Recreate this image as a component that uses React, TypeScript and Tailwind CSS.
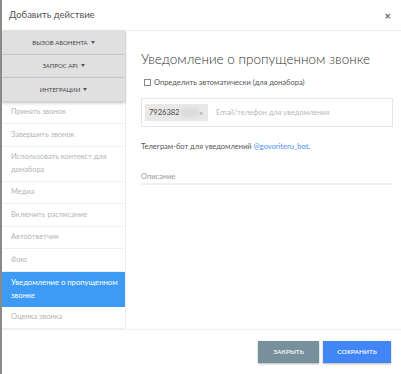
import React from "react";

const items: { label: string; active?: boolean }[] = [
  { label: "Принять звонок" },
  { label: "Завершить звонок" },
  { label: "Использовать контекст для донабора" },
  { label: "Медиа" },
  { label: "Включить расписание" },
  { label: "Автоответчик" },
  { label: "Факс" },
  { label: "Уведомление о пропущенном звонке", active: true },
  { label: "Оценка звонка" },
];

const groups = ["Вызов абонента", "Запрос API", "Интеграции"];

function Caret() {
  return <span className="ml-[3px] inline-block border-x-[2.5px] border-t-[3px] border-x-transparent border-t-[#555] align-middle" />;
}

export default function App() {
  return (
    <div
      className="flex h-[374px] w-[401px] flex-col overflow-hidden border-l-2 border-[#8a8a8a] bg-white"
      style={{ fontFamily: 'Lato, "Open Sans", sans-serif' }}
    >
      {/* Header */}
      <div className="flex h-[31px] shrink-0 items-center justify-between border-b border-[#eeeeee] pl-[7px] pr-[10px]">
        <span className="text-[9.5px] text-[#555]">Добавить действие</span>
        <span className="text-[11px] font-bold leading-none text-[#666]">×</span>
      </div>

      {/* Body */}
      <div className="flex h-[298px] shrink-0">
        <div className="flex w-[124px] shrink-0 flex-col border-r border-[#eeeeee]">
          {groups.map((g) => (
            <div
              key={g}
              className="flex h-[23.5px] shrink-0 items-center justify-center border-b border-[#cfcfcf] bg-[#e0e0e0] text-[6px] uppercase text-[#444] shadow-[0_1px_3px_rgba(0,0,0,0.25)]"
            >
              {g}
              <Caret />
            </div>
          ))}
          {items.map((it) => (
            <div
              key={it.label}
              className={
                it.active
                  ? "shrink-0 border-b border-[#3d9bf6] bg-[#3d9bf6] py-[4.5px] pl-[9px] pr-[2px] text-[7.7px] leading-[12.5px] text-white"
                  : "shrink-0 border-b border-[#f0f0f0] py-[4.5px] pl-[9px] pr-[4px] text-[7.5px] leading-[12.5px] text-[#b4b4b4]"
              }
            >
              {it.label}
            </div>
          ))}
        </div>

        <div className="flex-1 pl-[15px] pr-[8px] pt-[18px]">
          <h2 className="text-[13.5px] font-light leading-[20px] text-[#333]">Уведомление о пропущенном звонке</h2>
          <label className="mt-[8px] flex items-center gap-[3px] text-[7.5px] text-[#555]">
            <span className="ml-[3px] inline-block h-[7px] w-[7px] border border-[#888] bg-white" />
            Определить автоматически (для донабора)
          </label>
          <div className="mt-[10px] flex h-[29px] items-center gap-[8px] border border-[#e6e6e6] px-[3px]">
            <div className="flex h-[17px] w-[63px] items-center bg-[#e8e8e8] pl-[4px] pr-[5px] text-[7.5px] text-[#444]">
              <span>7926382</span>
              <span className="ml-[1px] h-[9px] w-[22px] rounded-sm bg-[#dcdcdc] blur-[1.5px]" />
              <span className="ml-auto text-[7px] text-[#999]">×</span>
            </div>
            <span className="text-[7.5px] text-[#b8b8b8]">Email/телефон для уведомления</span>
          </div>
          <p className="mt-[14px] text-[7.5px] text-[#555]">
            Телеграм-бот для уведомлений <span className="text-[#4a8ef0]">@govoriteru_bot</span>.
          </p>
          <div className="mt-[18px] border-b-2 border-[#f0f0f0] pb-[1px] text-[7.5px] text-[#999]">Описание</div>
        </div>
      </div>

      {/* Footer */}
      <div className="flex flex-1 items-center justify-end gap-[4px] border-t border-[#f0f0f0] pr-[10px]">
        <button className="h-[22px] w-[61px] bg-[#78909c] text-[6.5px] font-semibold uppercase text-white shadow-[0_1px_2px_rgba(0,0,0,0.3)]">
          Закрыть
        </button>
        <button className="h-[22px] w-[68px] bg-[#4285f4] text-[6.5px] font-semibold uppercase text-white shadow-[0_1px_2px_rgba(0,0,0,0.3)]">
          Сохранить
        </button>
      </div>
    </div>
  );
}
